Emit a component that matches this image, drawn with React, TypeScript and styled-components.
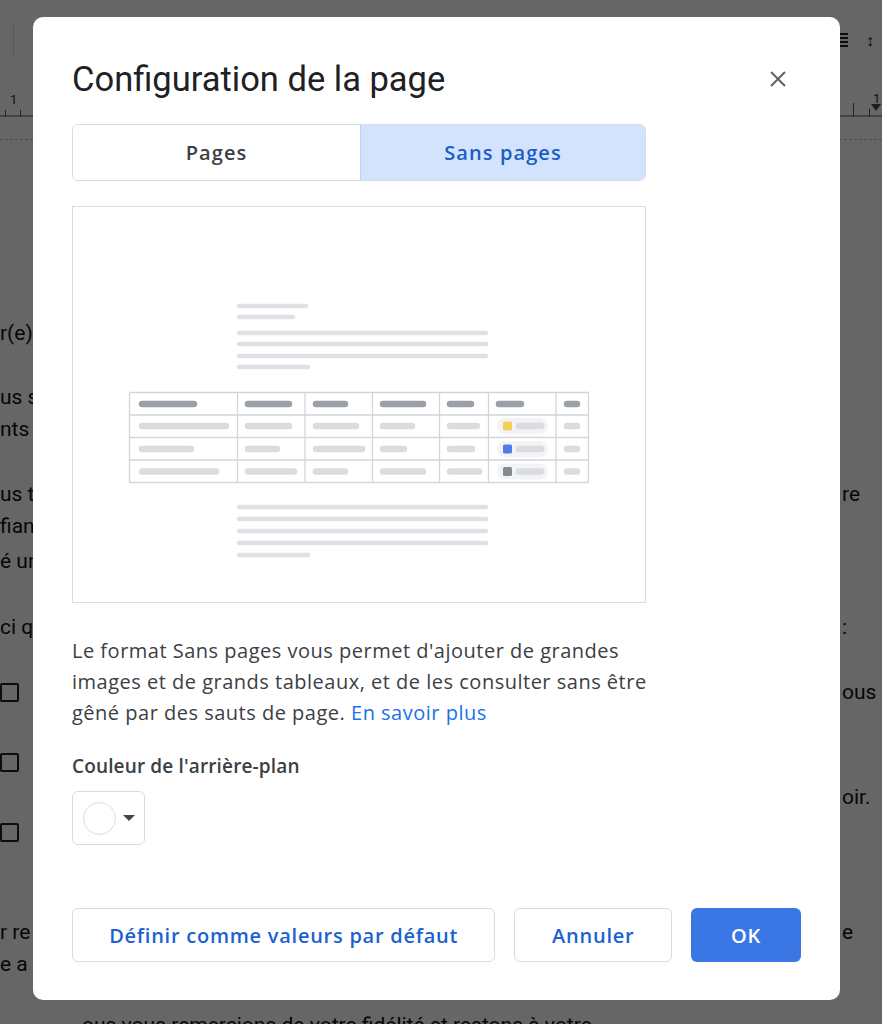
import React from 'react'
import styled, { createGlobalStyle } from 'styled-components'

const GlobalStyle = createGlobalStyle`
  html, body {
    margin: 0;
    padding: 0;
  }
  body {
    font-family: Roboto, 'Noto Sans', Arial, sans-serif;
    background: #fff;
  }
  * {
    box-sizing: border-box;
  }
`

const UI_FONT = `'Open Sans', Roboto, Arial, sans-serif`

// ---------- the document behind the dialog ----------

const Page = styled.div`
  position: relative;
  width: 882px;
  height: 1024px;
  overflow: hidden;
  background: #fff;
`

const Toolbar = styled.div`
  height: 80px;
  display: flex;
  align-items: center;
  justify-content: space-between;
  padding: 0 8px 0 13px;
`

const ToolbarSep = styled.div`
  width: 1px;
  height: 30px;
  background: #dcdcdc;
`

const ToolbarIcons = styled.div`
  display: flex;
  align-items: center;
  gap: 18px;
`

const Ruler = styled.div`
  height: 60px;
  border-bottom: 1px dashed #c4c4c4;
`

const DocBody = styled.div`
  display: flex;
  flex-direction: column;
`

const DocRow = styled.div<{ $gap: number; $indent?: number }>`
  display: grid;
  grid-template-columns: 842px 1fr;
  height: 32px;
  margin-top: ${({ $gap }) => $gap}px;
  padding-left: ${({ $indent }) => $indent || 0}px;
  align-items: center;
  font-size: 21px;
  color: #111;
  white-space: nowrap;
`

const Checkbox = styled.span`
  display: block;
  width: 19px;
  height: 19px;
  border: 2px solid #222;
  border-radius: 2px;
`

const Overlay = styled.div`
  position: absolute;
  inset: 0;
  background: rgba(0, 0, 0, 0.6);
  padding: 17px 0 0 33px;
`

// ---------- the dialog ----------

const Dialog = styled.div`
  width: 807px;
  height: 983px;
  background: #fff;
  border-radius: 10px;
  padding: 40px 39px 38px;
  display: flex;
  flex-direction: column;
  color: #3c4043;
  font-family: ${UI_FONT};
`

const Header = styled.div`
  height: 44px;
  display: flex;
  align-items: center;
  justify-content: space-between;
`

const Title = styled.h1`
  margin: 0;
  font-family: Roboto, Arial, sans-serif;
  font-size: 34.5px;
  font-weight: 400;
  line-height: 44px;
  color: #202124;
`

const CloseButton = styled.button`
  width: 32px;
  height: 32px;
  margin-right: 7px;
  padding: 0;
  border: none;
  background: none;
  display: flex;
  align-items: center;
  justify-content: center;
`

const Segmented = styled.div`
  margin-top: 23px;
  width: 574px;
  height: 57px;
  display: grid;
  grid-template-columns: 287px 1fr;
  border: 1px solid #dadce0;
  border-radius: 6px;
  overflow: hidden;
`

const Tab = styled.div<{ $active?: boolean }>`
  display: flex;
  align-items: center;
  justify-content: center;
  font-size: 20px;
  font-weight: 600;
  letter-spacing: 1.1px;
  color: ${({ $active }) => ($active ? '#1b5cc6' : '#3c4043')};
  background: ${({ $active }) => ($active ? '#d3e3fd' : '#fff')};
  border-left: ${({ $active }) => ($active ? '1px solid #b9d0f7' : 'none')};
`

const Preview = styled.div`
  margin-top: 25px;
  width: 574px;
  height: 397px;
  border: 1px solid #dadce0;
  svg {
    display: block;
  }
`

const Description = styled.p`
  margin: 32px 0 0;
  font-size: 20px;
  letter-spacing: 0.5px;
  line-height: 31px;
  color: #3c4043;
  white-space: nowrap;
`

const Link = styled.a`
  color: #1a73e8;
  text-decoration: none;
`

const Label = styled.div`
  margin-top: 25px;
  font-size: 19px;
  font-weight: 600;
  letter-spacing: 0.15px;
  line-height: 26px;
  color: #3c4043;
`

const ColorButton = styled.button`
  margin-top: 12px;
  width: 73px;
  height: 54px;
  padding: 0 0 0 10px;
  border: 1px solid #dadce0;
  border-radius: 6px;
  background: #fff;
  display: flex;
  align-items: center;
  gap: 7px;
`

const Swatch = styled.span`
  width: 33px;
  height: 33px;
  border-radius: 50%;
  border: 1px solid #dadce0;
  background: #fff;
`

const Caret = styled.span`
  width: 0;
  height: 0;
  border-left: 6px solid transparent;
  border-right: 6px solid transparent;
  border-top: 6px solid #444746;
`

const Footer = styled.div`
  margin-top: auto;
  display: flex;
  gap: 19px;
`

const FooterButton = styled.button<{ $primary?: boolean; $width: number }>`
  width: ${({ $width }) => $width}px;
  height: 54px;
  border-radius: 6px;
  font-family: ${UI_FONT};
  font-size: 20px;
  font-weight: 600;
  letter-spacing: 0.75px;
  border: ${({ $primary }) => ($primary ? 'none' : '1px solid #dadce0')};
  background: ${({ $primary }) => ($primary ? '#3a77e5' : '#fff')};
  color: ${({ $primary }) => ($primary ? '#fff' : '#1b62d0')};
`

// ---------- preview illustration data (page coordinates) ----------

const textLines: [number, number, number][] = [
  [237, 306, 308],
  [237, 317, 295],
  [237, 333, 488],
  [237, 344, 488],
  [237, 356, 488],
  [237, 367, 310],
  [237, 507, 488],
  [237, 519, 488],
  [237, 531, 488],
  [237, 543, 488],
  [237, 555, 310],
]

const colX = [129.5, 237.5, 305, 372.5, 439.5, 488.5, 556, 588.5]
const rowY = [392.5, 415, 437.5, 460, 482.5]

const headerPills: [number, number][] = [
  [139, 197],
  [245, 292],
  [313, 348],
  [380, 426],
  [447, 474],
  [496, 524],
  [564, 580],
]

const bodyPills: { y: number; cells: [number, number][]; chip: string }[] = [
  {
    y: 426,
    cells: [[139, 229], [245, 292], [313, 359], [380, 415], [447, 480], [564, 580]],
    chip: '#f5ce5a',
  },
  {
    y: 449,
    cells: [[139, 194], [245, 280], [313, 365], [380, 407], [447, 475], [564, 580]],
    chip: '#4d7ee8',
  },
  {
    y: 471.5,
    cells: [[139, 219], [245, 297], [313, 348], [380, 426], [447, 482], [564, 580]],
    chip: '#86898d',
  },
]

const PreviewArt = () => (
  <svg width="572" height="395" viewBox="73 207 572 395">
    <g stroke="#dfe1e5" strokeWidth="4.5" strokeLinecap="round">
      {textLines.map(([x1, y, x2], i) => (
        <line key={i} x1={x1 + 2} y1={y} x2={x2 - 2} y2={y} />
      ))}
    </g>
    <g stroke="#d3d5d8" strokeWidth="1.3" fill="none">
      {rowY.map((y) => (
        <line key={y} x1={colX[0]} y1={y} x2={colX[7]} y2={y} />
      ))}
      {colX.map((x) => (
        <line key={x} x1={x} y1={rowY[0]} x2={x} y2={rowY[4]} />
      ))}
    </g>
    <g stroke="#9aa0a6" strokeWidth="6.5" strokeLinecap="round">
      {headerPills.map(([a, b]) => (
        <line key={a} x1={a + 3} y1={404} x2={b - 3} y2={404} />
      ))}
    </g>
    {bodyPills.map((row) => (
      <g key={row.y}>
        <g stroke="#dadce0" strokeWidth="6.5" strokeLinecap="round">
          {row.cells.map(([a, b]) => (
            <line key={a} x1={a + 3} y1={row.y} x2={b - 3} y2={row.y} />
          ))}
        </g>
        <rect x="497" y={row.y - 8} width="51" height="16" rx="8" fill="#f1f3f4" />
        <rect x="503" y={row.y - 4.5} width="9" height="9" rx="1.5" fill={row.chip} />
        <line
          x1="519"
          y1={row.y}
          x2="541"
          y2={row.y}
          stroke="#dadce0"
          strokeWidth="6.5"
          strokeLinecap="round"
        />
      </g>
    ))}
  </svg>
)

// ---------- document rows behind the overlay ----------

type Row = { y: number; left?: string; right?: string; check?: boolean; indent?: number }

const docRows: Row[] = [
  { y: 334, left: 'r(e) client(e),' },
  { y: 398, left: 'us sommes heureux' },
  { y: 430, left: 'nts' },
  { y: 495, left: 'us tenons à', right: 're' },
  { y: 527, left: 'fiance' },
  { y: 562, left: 'é un' },
  { y: 628, left: 'ci q', right: ':' },
  { y: 693, check: true, right: 'ous' },
  { y: 763, check: true },
  { y: 798, right: 'oir.' },
  { y: 833, check: true },
  { y: 933, left: 'r re', right: 'e' },
  { y: 965, left: 'e a' },
  { y: 1026, left: 'ous vous remercions de votre fidélité et restons à votre', indent: 82 },
]

const BODY_TOP = 141

const rowsWithGap = docRows.map((row, i) => {
  const prevBottom = i === 0 ? BODY_TOP : docRows[i - 1].y + 16
  return { ...row, gap: row.y - 16 - prevBottom }
})

const RulerArt = () => (
  <svg width="882" height="60" viewBox="0 80 882 60">
    <g fill="#333" fontSize="13" fontFamily="Roboto, sans-serif">
      <text x="10" y="104">1</text>
      <text x="873" y="103">1</text>
    </g>
    <g stroke="#555" strokeWidth="1">
      <line x1="0" y1="116" x2="33" y2="116" />
      <line x1="840" y1="116" x2="882" y2="116" />
      <line x1="5.5" y1="110" x2="5.5" y2="116" />
      <line x1="20.5" y1="110" x2="20.5" y2="116" />
      <line x1="853.5" y1="103" x2="853.5" y2="116" />
      <line x1="869.5" y1="109" x2="869.5" y2="116" />
    </g>
    <path d="M871 104h10l-5 7z" fill="#4a4a4a" />
  </svg>
)

const AlignIcon = () => (
  <svg width="12" height="16" viewBox="0 0 12 16">
    <g fill="#222">
      <rect x="0" y="1" width="12" height="2" />
      <rect x="0" y="5" width="12" height="2" />
      <rect x="0" y="9" width="12" height="2" />
      <rect x="0" y="13" width="12" height="2" />
    </g>
  </svg>
)

const CloseIcon = () => (
  <svg width="16" height="16" viewBox="0 0 16 16">
    <path d="M1 1L15 15M15 1L1 15" stroke="#5f6368" strokeWidth="2" />
  </svg>
)

export default function App() {
  return (
    <Page>
      <GlobalStyle />
      <Toolbar>
        <ToolbarSep />
        <ToolbarIcons>
          <AlignIcon />
          <span style={{ fontSize: 16, color: '#222' }}>↕</span>
        </ToolbarIcons>
      </Toolbar>
      <Ruler>
        <RulerArt />
      </Ruler>
      <DocBody>
        {rowsWithGap.map((row) => (
          <DocRow key={row.y} $gap={row.gap} $indent={row.indent}>
            <span>{row.check ? <Checkbox /> : row.left}</span>
            <span>{row.right}</span>
          </DocRow>
        ))}
      </DocBody>

      <Overlay>
        <Dialog role="dialog">
          <Header>
            <Title>Configuration de la page</Title>
            <CloseButton aria-label="Fermer">
              <CloseIcon />
            </CloseButton>
          </Header>

          <Segmented>
            <Tab>Pages</Tab>
            <Tab $active>Sans pages</Tab>
          </Segmented>

          <Preview>
            <PreviewArt />
          </Preview>

          <Description>
            Le format Sans pages vous permet d'ajouter de grandes
            <br />
            images et de grands tableaux, et de les consulter sans être
            <br />
            gêné par des sauts de page. <Link href="#">En savoir plus</Link>
          </Description>

          <Label>Couleur de l'arrière-plan</Label>
          <ColorButton aria-label="Couleur de l'arrière-plan">
            <Swatch />
            <Caret />
          </ColorButton>

          <Footer>
            <FooterButton $width={424}>Définir comme valeurs par défaut</FooterButton>
            <FooterButton $width={158}>Annuler</FooterButton>
            <FooterButton $width={110} $primary>
              OK
            </FooterButton>
          </Footer>
        </Dialog>
      </Overlay>
    </Page>
  )
}
